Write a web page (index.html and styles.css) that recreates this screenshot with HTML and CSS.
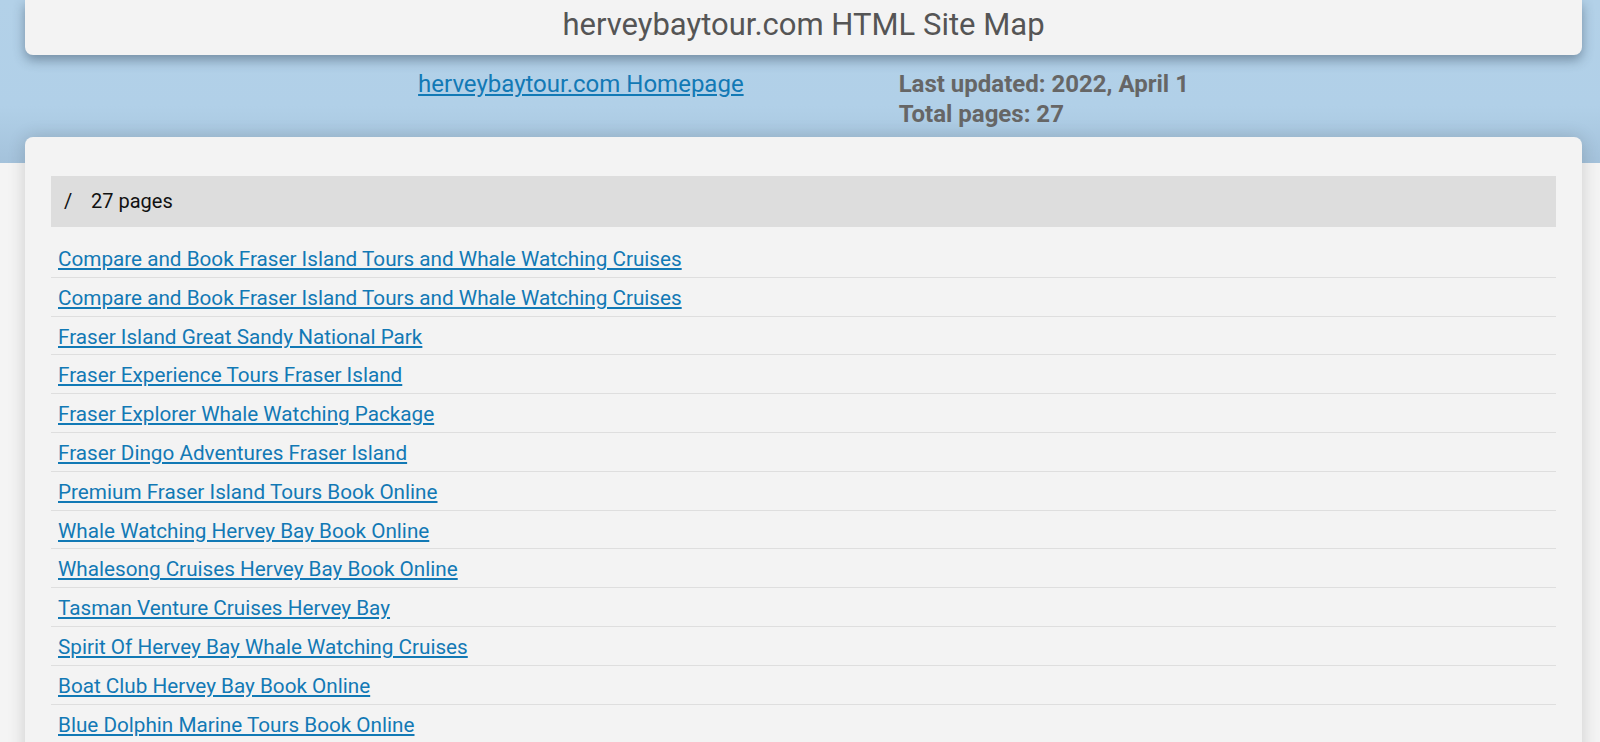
FILE: index.html
```html
<!DOCTYPE html>
<html>
<head>
	<meta charset="utf-8">
	<title>herveybaytour.com HTML Site Map</title>
	<link rel="stylesheet" href="styles.css">
</head>
<body>
	<div class="head">
		<h1>herveybaytour.com HTML Site Map</h1>
	</div>
	<div class="info">
		<a class="home" href="#">herveybaytour.com Homepage</a>
		<div class="stats">
			<div>Last updated: 2022, April 1</div>
			<div>Total pages: 27</div>
		</div>
	</div>
	<div class="main">
		<div class="dir"><span class="slash">/</span>27 pages</div>
		<ul class="pages">
			<li><a href="#">Compare and Book Fraser Island Tours and Whale Watching Cruises</a></li>
			<li><a href="#">Compare and Book Fraser Island Tours and Whale Watching Cruises</a></li>
			<li><a href="#">Fraser Island Great Sandy National Park</a></li>
			<li><a href="#">Fraser Experience Tours Fraser Island</a></li>
			<li><a href="#">Fraser Explorer Whale Watching Package</a></li>
			<li><a href="#">Fraser Dingo Adventures Fraser Island</a></li>
			<li><a href="#">Premium Fraser Island Tours Book Online</a></li>
			<li><a href="#">Whale Watching Hervey Bay Book Online</a></li>
			<li><a href="#">Whalesong Cruises Hervey Bay Book Online</a></li>
			<li><a href="#">Tasman Venture Cruises Hervey Bay</a></li>
			<li><a href="#">Spirit Of Hervey Bay Whale Watching Cruises</a></li>
			<li><a href="#">Boat Club Hervey Bay Book Online</a></li>
			<li><a href="#">Blue Dolphin Marine Tours Book Online</a></li>
			<li><a href="#">Lady Elliot Island Day Tours Book Online</a></li>
			<li><a href="#">Fraser Island Tours From Hervey Bay</a></li>
			<li><a href="#">Fraser Island 4WD Tours Book Online</a></li>
			<li><a href="#">Fraser Island Scenic Flights Hervey Bay</a></li>
			<li><a href="#">Kingfisher Bay Resort Day Tours</a></li>
			<li><a href="#">Hervey Bay Fishing Charters Book Online</a></li>
			<li><a href="#">Hervey Bay Kayak Tours Book Online</a></li>
			<li><a href="#">Hervey Bay Jet Ski Tours</a></li>
			<li><a href="#">Hervey Bay Skydiving Book Online</a></li>
			<li><a href="#">Lake McKenzie Day Tour Fraser Island</a></li>
			<li><a href="#">Fraser Island Camping Tours</a></li>
			<li><a href="#">Hervey Bay Accommodation Packages</a></li>
			<li><a href="#">Contact Us</a></li>
			<li><a href="#">Privacy Policy</a></li>
		</ul>
	</div>
</body>
</html>
```

FILE: styles.css
```css
*{
	margin: 0;
	padding: 0;
	box-sizing: border-box;
}
body{
	font-family: Roboto, "Liberation Sans", sans-serif;
	background: linear-gradient(to bottom, #b3d1e8 0%, #b1d0e8 65%, #a4c2db 100%) no-repeat 0 0 / 100% 163px, #f4f4f4;
	padding: 0 18px 20px 25px;
}
.head{
	height: 55px;
	background: #f3f3f3;
	border-radius: 0 0 8px 8px;
	box-shadow: 0 5px 12px rgba(40, 60, 80, 0.45);
	text-align: center;
}
.head h1{
	font-size: 31px;
	font-weight: 400;
	line-height: 50px;
	color: #555;
}
.info{
	display: flex;
	justify-content: center;
	gap: 155px;
	margin-top: 14px;
	font-size: 24px;
	line-height: 30px;
}
.home{
	color: #1279b5;
}
.stats{
	font-weight: 700;
	color: #666;
}
.main{
	margin-top: 8px;
	background: #f3f3f3;
	border-radius: 8px;
	box-shadow: 0 0 18px rgba(0, 0, 0, 0.16);
	padding: 39px 26px 20px;
}
.dir{
	height: 51px;
	line-height: 51px;
	background: #dddddd;
	padding-left: 13px;
	font-size: 20px;
	color: #111;
}
.slash{
	display: inline-block;
	width: 27px;
}
.pages{
	list-style: none;
	margin-top: 12px;
}
.pages li{
	border-bottom: 1px solid #dedede;
	padding: 3px 7px 0;
	line-height: 34.8px;
	font-size: 20.7px;
}
.pages a{
	color: #1279b5;
}
```
